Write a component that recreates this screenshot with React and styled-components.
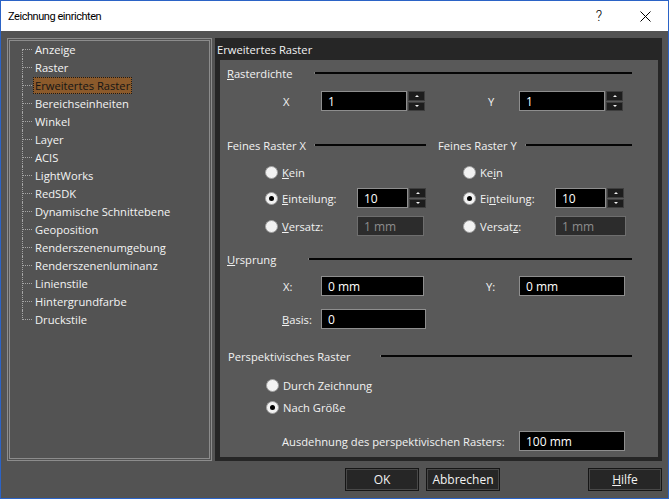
import React from "react";
import styled, { createGlobalStyle } from "styled-components";

const GlobalStyle = createGlobalStyle`
  html, body {
    margin: 0;
    padding: 0;
    background: #535353;
  }
  body {
    font-family: "Open Sans", "Noto Sans", sans-serif;
    font-size: 11.2px;
  }
  * {
    box-sizing: border-box;
  }
`;

const treeItems = [
  "Anzeige",
  "Raster",
  "Erweitertes Raster",
  "Bereichseinheiten",
  "Winkel",
  "Layer",
  "ACIS",
  "LightWorks",
  "RedSDK",
  "Dynamische Schnittebene",
  "Geoposition",
  "Renderszenenumgebung",
  "Renderszenenluminanz",
  "Linienstile",
  "Hintergrundfarbe",
  "Druckstile",
];

const Spin = () => (
  <Spinner>
    <SpinButton>
      <ArrowUp />
    </SpinButton>
    <SpinButton>
      <ArrowDown />
    </SpinButton>
  </Spinner>
);

const RadioOption = ({ checked, children, w }) => (
  <RadioWrap $w={w}>
    <Radio $checked={checked} />
    <span>{children}</span>
  </RadioWrap>
);

const App = () => {
  return (
    <>
      <GlobalStyle />
      <Window>
        <TitleBar>
          <Title>Zeichnung einrichten</Title>
          <TitleButton>?</TitleButton>
          <TitleButton>
            <svg width="11" height="11" viewBox="0 0 11 11">
              <path d="M0.5 0.5 L10.5 10.5 M10.5 0.5 L0.5 10.5" stroke="#000" strokeWidth="1" />
            </svg>
          </TitleButton>
        </TitleBar>

        <Body>
          <Panels>
            <TreePanel>
              <Tree>
                {treeItems.map((name, i) => (
                  <TreeItem key={name} $first={i === 0} $last={i === treeItems.length - 1}>
                    <TreeLabel $selected={name === "Erweitertes Raster"}>{name}</TreeLabel>
                  </TreeItem>
                ))}
              </Tree>
            </TreePanel>

            <PagePanel>
              <PageHeader>Erweitertes Raster</PageHeader>
              <PageContent>
                <SectionHead $mt={3}>
                  <HeadLabel $w={87}>
                    <u>R</u>asterdichte
                  </HeadLabel>
                  <Rule />
                </SectionHead>

                <TwoCol $mt={8}>
                  <Cell>
                    <FieldLabel $pl={56} $w={94}>X</FieldLabel>
                    <TextBox $w={86}>1</TextBox>
                    <Spin />
                  </Cell>
                  <Cell>
                    <FieldLabel $pl={50} $w={81}>Y</FieldLabel>
                    <TextBox $w={86}>1</TextBox>
                    <Spin />
                  </Cell>
                </TwoCol>

                <TwoCol $mt={24}>
                  <SectionHeadCell $pr={12}>
                    <HeadLabel $w={87}>Feines Raster X</HeadLabel>
                    <Rule />
                  </SectionHeadCell>
                  <SectionHeadCell>
                    <HeadLabel $w={87}>Feines Raster Y</HeadLabel>
                    <Rule />
                  </SectionHeadCell>
                </TwoCol>

                <TwoCol $mt={7}>
                  <Cell $pl={38}>
                    <RadioOption>
                      <u>K</u>ein
                    </RadioOption>
                  </Cell>
                  <Cell $pl={25}>
                    <RadioOption>
                      Ke<u>i</u>n
                    </RadioOption>
                  </Cell>
                </TwoCol>

                <TwoCol $mt={6}>
                  <Cell $pl={38}>
                    <RadioOption checked w={92}>
                      <u>E</u>inteilung:
                    </RadioOption>
                    <TextBox $w={51}>10</TextBox>
                    <Spin />
                  </Cell>
                  <Cell $pl={25}>
                    <RadioOption checked w={92}>
                      Ei<u>n</u>teilung:
                    </RadioOption>
                    <TextBox $w={51}>10</TextBox>
                    <Spin />
                  </Cell>
                </TwoCol>

                <TwoCol $mt={8}>
                  <Cell $pl={38}>
                    <RadioOption w={92}>
                      <u>V</u>ersatz:
                    </RadioOption>
                    <TextBox $w={67} $disabled>
                      1 mm
                    </TextBox>
                  </Cell>
                  <Cell $pl={25}>
                    <RadioOption w={92}>
                      Versat<u>z</u>:
                    </RadioOption>
                    <TextBox $w={71} $disabled>
                      1 mm
                    </TextBox>
                  </Cell>
                </TwoCol>

                <SectionHead $mt={13}>
                  <HeadLabel $w={81}>
                    <u>U</u>rsprung
                  </HeadLabel>
                  <Rule />
                </SectionHead>

                <TwoCol $mt={7}>
                  <Cell>
                    <FieldLabel $pl={56} $w={94}>X:</FieldLabel>
                    <TextBox $w={103}>0 mm</TextBox>
                  </Cell>
                  <Cell>
                    <FieldLabel $pl={48} $w={81}>Y:</FieldLabel>
                    <TextBox $w={106}>0 mm</TextBox>
                  </Cell>
                </TwoCol>

                <TwoCol $mt={13}>
                  <Cell>
                    <FieldLabel $pl={55} $w={94}>
                      <u>B</u>asis:
                    </FieldLabel>
                    <TextBox $w={105}>0</TextBox>
                  </Cell>
                </TwoCol>

                <SectionHead $mt={17}>
                  <HeadLabel $w={153} $pl={1}>Perspektivisches Raster</HeadLabel>
                  <Rule />
                </SectionHead>

                <Row $mt={9} $pl={39}>
                  <RadioOption>Durch Zeichnung</RadioOption>
                </Row>
                <Row $mt={2} $pl={39}>
                  <RadioOption checked>Nach Größe</RadioOption>
                </Row>

                <Row $mt={14}>
                  <FieldLabel $pl={55} $w={292}>
                    Ausdehnung des perspektivischen Rasters:
                  </FieldLabel>
                  <TextBox $w={106}>100 mm</TextBox>
                </Row>
              </PageContent>
            </PagePanel>
          </Panels>

          <ButtonBar>
            <Button>OK</Button>
            <Button>Abbrechen</Button>
            <Button $ml={81}>
              <u>H</u>ilfe
            </Button>
          </ButtonBar>
        </Body>
      </Window>
    </>
  );
};

const Window = styled.div`
  width: 669px;
  height: 499px;
  display: flex;
  flex-direction: column;
  border: 1px solid #2b63c6;
  background: #535353;
  color: #f2f2f2;
  overflow: hidden;
`;

const TitleBar = styled.div`
  height: 30px;
  flex-shrink: 0;
  display: flex;
  align-items: center;
  background: #ffffff;
  color: #000000;
  padding-left: 7px;
`;

const Title = styled.div`
  flex: 1;
  font-family: Roboto, "Open Sans", sans-serif;
  font-size: 11px;
  letter-spacing: -0.45px;
`;

const TitleButton = styled.div`
  width: 46px;
  height: 30px;
  display: flex;
  align-items: center;
  justify-content: center;
  font-family: Roboto, "Open Sans", sans-serif;
  font-weight: 300;
  font-size: 14px;
`;

const Body = styled.div`
  flex: 1;
  display: flex;
  flex-direction: column;
  padding: 7px 6px 6px 6px;
  gap: 7px;
`;

const Panels = styled.div`
  height: 423px;
  display: flex;
  gap: 3px;
`;

const TreePanel = styled.div`
  width: 205px;
  border: 3px double #8c8c8c;
  background: #535353;
`;

const Tree = styled.ul`
  list-style: none;
  margin: -1px 0 0 0;
  padding: 0;
`;

const TreeItem = styled.li`
  position: relative;
  height: 18px;
  display: flex;
  align-items: center;
  padding-left: 23px;

  &::before {
    content: "";
    position: absolute;
    left: 12px;
    top: ${(p) => (p.$first ? "9px" : "0")};
    height: ${(p) => (p.$first || p.$last ? "10px" : "18px")};
    border-left: 1px dotted #a6a6a6;
  }

  &::after {
    content: "";
    position: absolute;
    left: 13px;
    top: 9px;
    width: 9px;
    border-top: 1px dotted #a6a6a6;
  }
`;

const TreeLabel = styled.span`
  height: 17px;
  line-height: 15px;
  padding: 0 1px;
  border: 1px ${(p) => (p.$selected ? "dotted #1a1a1a" : "solid transparent")};
  background: ${(p) => (p.$selected ? "#8b5a2b" : "transparent")};
  color: ${(p) => (p.$selected ? "#151515" : "#f4f4f4")};
  white-space: nowrap;
`;

const PagePanel = styled.div`
  width: 447px;
  display: flex;
  flex-direction: column;
  background: #262626;
  padding: 0 4px 4px 5px;
`;

const PageHeader = styled.div`
  height: 22px;
  display: flex;
  align-items: center;
  margin-left: -3px;
  color: #f2f2f2;
`;

const PageContent = styled.div`
  flex: 1;
  background: #595959;
  padding-left: 7px;
  display: flex;
  flex-direction: column;
`;

const SectionHead = styled.div`
  width: 405px;
  height: 20px;
  margin-top: ${(p) => p.$mt || 0}px;
  display: flex;
  align-items: center;
`;

const SectionHeadCell = styled.div`
  height: 20px;
  display: flex;
  align-items: center;
  padding-right: ${(p) => p.$pr || 0}px;
`;

const HeadLabel = styled.div`
  width: ${(p) => p.$w}px;
  padding-left: ${(p) => p.$pl || 0}px;
  flex-shrink: 0;
  white-space: nowrap;
`;

const Rule = styled.div`
  flex: 1;
  height: 2px;
  background: #050505;
  border-left: 1px solid #7a7a7a;
`;

const TwoCol = styled.div`
  display: grid;
  grid-template-columns: 211px 194px;
  height: 20px;
  margin-top: ${(p) => p.$mt || 0}px;
`;

const Row = styled.div`
  display: flex;
  align-items: center;
  height: 20px;
  margin-top: ${(p) => p.$mt || 0}px;
  padding-left: ${(p) => p.$pl || 0}px;
`;

const Cell = styled.div`
  display: flex;
  align-items: center;
  padding-left: ${(p) => p.$pl || 0}px;
`;

const FieldLabel = styled.div`
  width: ${(p) => p.$w}px;
  padding-left: ${(p) => p.$pl || 0}px;
  flex-shrink: 0;
  white-space: nowrap;
`;

const TextBox = styled.div`
  width: ${(p) => p.$w}px;
  height: 20px;
  flex-shrink: 0;
  display: flex;
  align-items: center;
  padding-left: 6px;
  background: ${(p) => (p.$disabled ? "#2c2c2c" : "#000000")};
  border: 1px solid ${(p) => (p.$disabled ? "#6e6e6e" : "#8e8e8e")};
  color: ${(p) => (p.$disabled ? "#8c8c8c" : "#ffffff")};
  font-size: 12px;
`;

const Spinner = styled.div`
  width: 17px;
  height: 20px;
  margin-left: 1px;
  display: flex;
  flex-direction: column;
  gap: 1px;
`;

const SpinButton = styled.div`
  flex: 1;
  display: flex;
  align-items: center;
  justify-content: center;
  background: #1d1d1d;
  border: 1px solid #3e3e3e;
`;

const ArrowUp = styled.div`
  width: 0;
  height: 0;
  border-left: 2px solid transparent;
  border-right: 2px solid transparent;
  border-bottom: 2px solid #f0f0f0;
`;

const ArrowDown = styled.div`
  width: 0;
  height: 0;
  border-left: 2px solid transparent;
  border-right: 2px solid transparent;
  border-top: 2px solid #f0f0f0;
`;

const RadioWrap = styled.div`
  display: flex;
  align-items: center;
  gap: 4px;
  width: ${(p) => (p.$w ? `${p.$w}px` : "auto")};
  flex-shrink: 0;
  white-space: nowrap;
`;

const Radio = styled.div`
  width: 13px;
  height: 13px;
  border-radius: 50%;
  background: #f2f2f2;
  border: 1px solid #a0a0a0;
  display: flex;
  align-items: center;
  justify-content: center;

  &::after {
    content: "";
    width: 5px;
    height: 5px;
    border-radius: 50%;
    background: ${(p) => (p.$checked ? "#000000" : "transparent")};
  }
`;

const ButtonBar = styled.div`
  height: 23px;
  display: flex;
  justify-content: flex-end;
  gap: 7px;
`;

const Button = styled.div`
  width: 74px;
  height: 23px;
  margin-left: ${(p) => p.$ml || 0}px;
  display: flex;
  align-items: center;
  justify-content: center;
  background: #262626;
  border: 1px solid #161616;
  box-shadow: inset 0 0 0 1px #484848;
  color: #f2f2f2;
  font-size: 12px;
`;

export default App;
